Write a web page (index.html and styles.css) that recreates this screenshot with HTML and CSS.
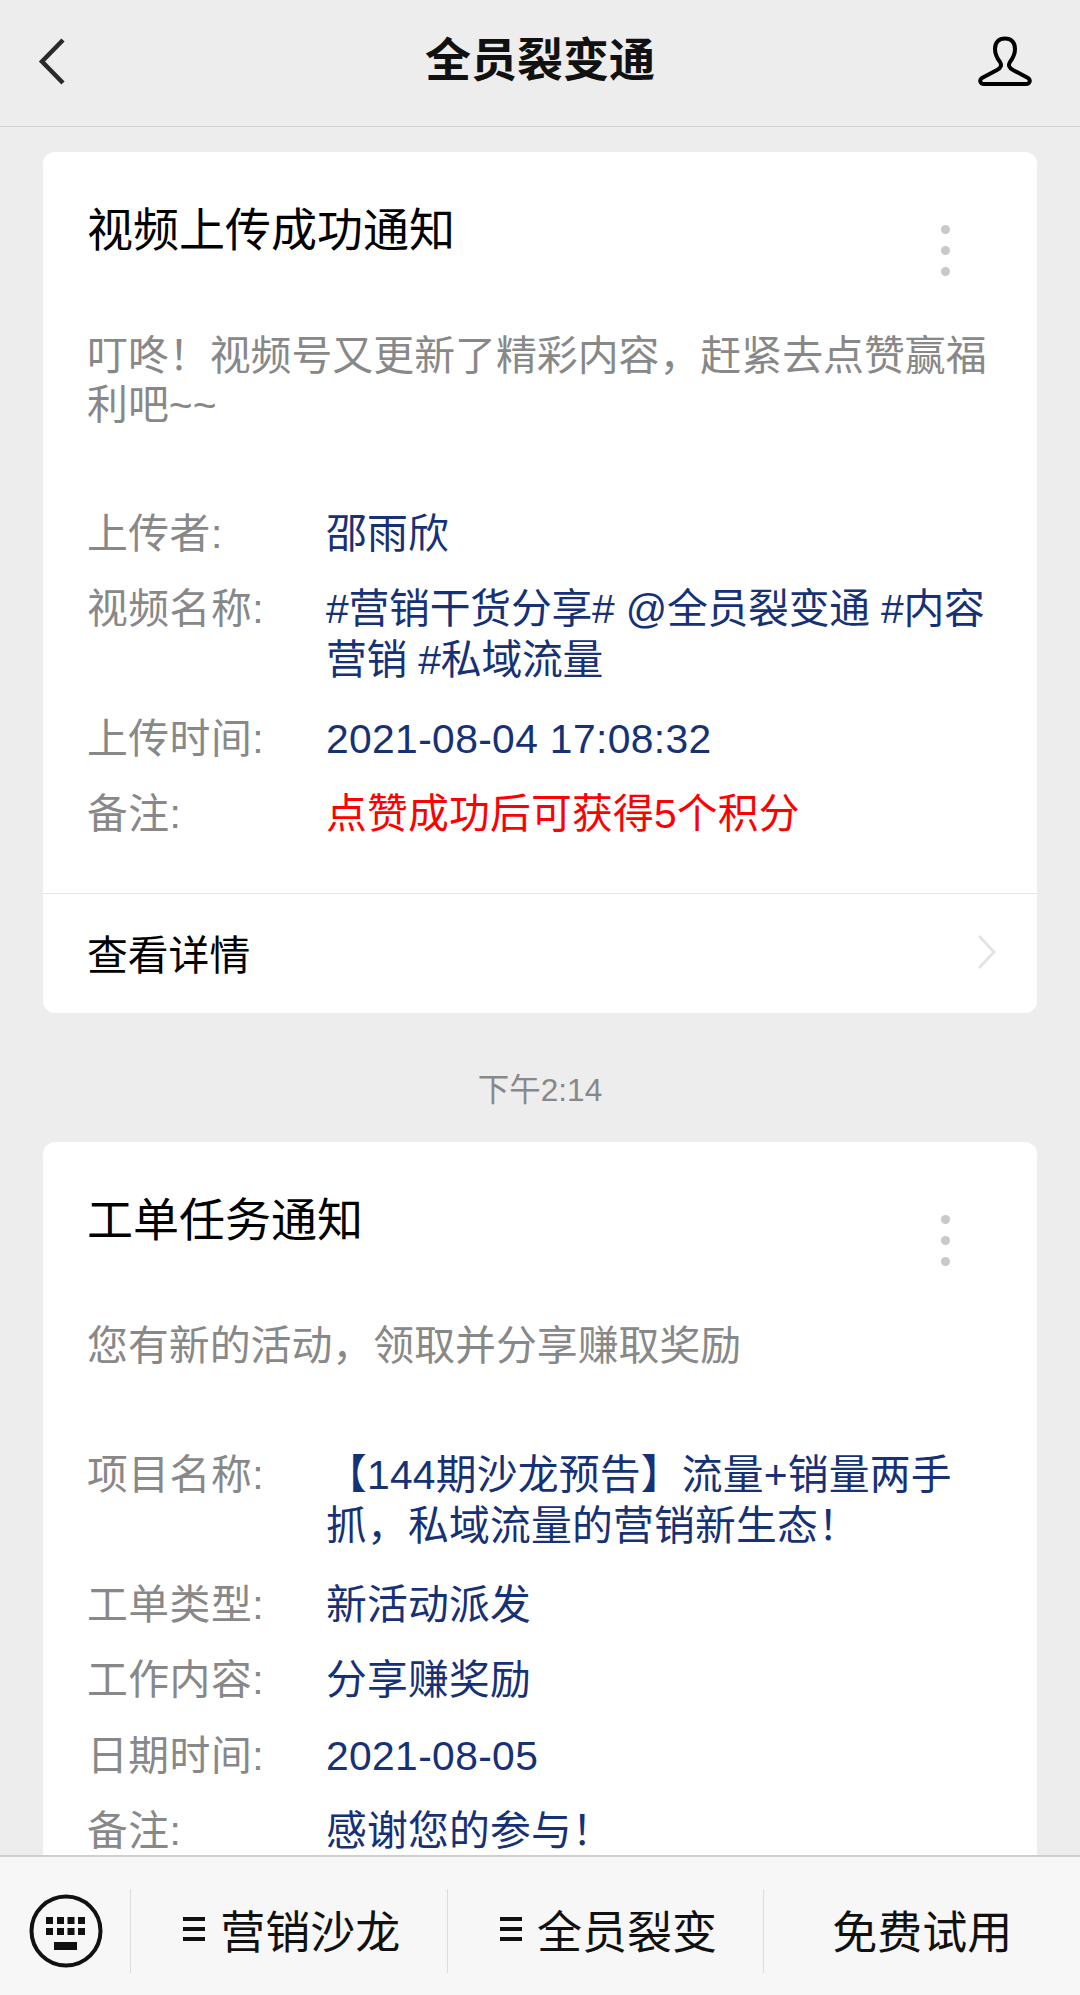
FILE: index.html
```html
<!DOCTYPE html>
<html lang="zh-CN">
<head>
  <meta charset="UTF-8">
  <title>全员裂变通</title>
  <link rel="stylesheet" href="styles.css">
</head>
<body>
<div class="app">

  <header class="nav">
    <svg width="110" height="126" viewBox="0 0 110 126">
      <path d="M63 40 L42 61.500 L63 83" fill="none" stroke="#2a2a2a" stroke-width="4.500"/>
    </svg>
    <h1 class="nav-title">全员裂变通</h1>
    <svg width="110" height="126" viewBox="0 0 110 126">
      <path d="M14 84 H56 C60 84 61 80 58 78 L43 70 C39 68 38 65 40 62 C43 58 45 54 45 49 C45 42 41 38.500 35 38.500 C29 38.500 25 42 25 49 C25 54 27 58 30 62 C32 65 31 68 27 70 L12 78 C9 80 10 84 14 84 Z" fill="none" stroke="#000" stroke-width="4"/>
    </svg>
  </header>

  <main class="feed">

    <!-- 第一条消息 -->
    <section class="card">
      <div class="card-body">
        <div class="title-row">
          <h2 class="card-title">视频上传成功通知</h2>
          <span class="dots"><i></i><i></i><i></i></span>
        </div>
        <p class="desc">叮咚！视频号又更新了精彩内容，赶紧去点赞赢福利吧~~</p>
        <div class="row">
          <span class="label">上传者:</span>
          <span class="value">邵雨欣</span>
        </div>
        <div class="row row-multi">
          <span class="label">视频名称:</span>
          <span class="value tight">#营销干货分享# @全员裂变通 #内容营销 #私域流量</span>
        </div>
        <div class="row">
          <span class="label">上传时间:</span>
          <span class="value num">2021-08-04 17:08:32</span>
        </div>
        <div class="row">
          <span class="label">备注:</span>
          <span class="value red">点赞成功后可获得5个积分</span>
        </div>
      </div>
      <div class="card-foot">
        <span>查看详情</span>
        <svg width="20" height="36" viewBox="0 0 20 36">
          <path d="M2 2 L17 18 L2 34" fill="none" stroke="#e4e4e4" stroke-width="3"/>
        </svg>
      </div>
    </section>

    <p class="time">下午2:14</p>

    <!-- 第二条消息 -->
    <section class="card">
      <div class="card-body">
        <div class="title-row">
          <h2 class="card-title">工单任务通知</h2>
          <span class="dots"><i></i><i></i><i></i></span>
        </div>
        <p class="desc">您有新的活动，领取并分享赚取奖励</p>
        <div class="row row-multi">
          <span class="label">项目名称:</span>
          <span class="value">【144期沙龙预告】流量+销量两手抓，私域流量的营销新生态！</span>
        </div>
        <div class="row">
          <span class="label">工单类型:</span>
          <span class="value">新活动派发</span>
        </div>
        <div class="row">
          <span class="label">工作内容:</span>
          <span class="value">分享赚奖励</span>
        </div>
        <div class="row">
          <span class="label">日期时间:</span>
          <span class="value num">2021-08-05</span>
        </div>
        <div class="row">
          <span class="label">备注:</span>
          <span class="value">感谢您的参与！</span>
        </div>
      </div>
    </section>

  </main>

  <footer class="bar">
    <div class="bar-key">
      <svg width="74" height="74" viewBox="0 0 74 74">
        <circle cx="37" cy="37" r="34.500" fill="none" stroke="#111" stroke-width="4"/>
        <g fill="#111">
          <rect x="17" y="23" width="7" height="7"/>
          <rect x="28" y="23" width="7" height="7"/>
          <rect x="38.500" y="23" width="7" height="7"/>
          <rect x="49" y="23" width="7" height="7"/>
          <rect x="17" y="34" width="7" height="7"/>
          <rect x="28" y="34" width="7" height="7"/>
          <rect x="38.500" y="34" width="7" height="7"/>
          <rect x="49" y="34" width="7" height="7"/>
          <rect x="25" y="48" width="23" height="8"/>
        </g>
      </svg>
    </div>
    <div class="bar-item"><span class="menu-mark"><i></i><i></i><i></i></span>营销沙龙</div>
    <div class="bar-item"><span class="menu-mark"><i></i><i></i><i></i></span>全员裂变</div>
    <div class="bar-item">免费试用</div>
  </footer>

</div>
</body>
</html>
```

FILE: styles.css
```css
* { box-sizing: border-box; }
body {
  margin: 0;
  background-color: #ededed;
  font-family: "Liberation Sans", "Noto Sans CJK SC", sans-serif;
}
h1, h2, p { margin: 0; font-weight: normal; }

.app {
  display: flex;
  flex-direction: column;
  height: 1995px;
  overflow: hidden;
}

/* barra superior */
.nav {
  flex: none;
  display: flex;
  justify-content: space-between;
  align-items: center;
  height: 127px;
  border-bottom: 1px solid #d6d6d6;
}
.nav-title {
  font-size: 46px;
  font-weight: bold;
  color: #111;
  margin-bottom: 14px;
}

/* mensajes */
.feed {
  flex: 1;
  min-height: 0;
  overflow: hidden;
  padding: 25px 43px 0;
}
.card {
  background-color: #fff;
  border-radius: 12px;
}
.card-body { padding: 48px 45px 52.500px 44px; }
.title-row {
  display: flex;
  justify-content: space-between;
  align-items: flex-start;
  height: 77px;
  margin-bottom: 55px;
}
.card-title {
  font-size: 46px;
  line-height: 60px;
  color: #000;
}
.dots {
  display: flex;
  flex-direction: column;
  gap: 12px;
  margin: 25px 42px 0 0;
}
.dots i {
  width: 9px;
  height: 9px;
  border-radius: 50%;
  background-color: #c8c8cd;
}
.desc {
  font-size: 40.900px;
  line-height: 48.500px;
  color: #888;
  margin-bottom: 79.500px;
}
.row {
  display: flex;
  font-size: 40.800px;
  line-height: 51px;
  margin-bottom: 24.400px;
}
.row:last-child { margin-bottom: 0; }
.row-multi { margin-bottom: 28px; }
.label {
  flex: none;
  width: 239px;
  color: #888;
  letter-spacing: 0.500px;
}
.value {
  flex: 1;
  color: #173177;
  letter-spacing: 0.200px;
}
.num { letter-spacing: 0.350px; }
.tight { letter-spacing: -0.200px; }
.red { color: #f00; }

.card-foot {
  display: flex;
  justify-content: space-between;
  align-items: center;
  height: 120px;
  padding: 0 40px 2px 44px;
  border-top: 1px solid #e5e5e5;
  font-size: 40.800px;
  color: #000;
}

.time {
  height: 129px;
  padding-top: 54px;
  font-size: 31.500px;
  line-height: 46px;
  text-align: center;
  color: #888;
}

/* menu inferior */
.bar {
  flex: none;
  display: flex;
  height: 140px;
  border-top: 2px solid #cfcfcf;
  background-color: #f7f7f7;
  padding: 32px 0 22px;
}
.bar-key {
  flex: none;
  display: flex;
  justify-content: center;
  align-items: center;
  width: 131px;
  padding-left: 2px;
  border-right: 1px solid #dcdcdc;
}
.bar-item {
  flex: 1;
  display: flex;
  justify-content: center;
  align-items: center;
  gap: 15px;
  padding-bottom: 4px;
  font-size: 45px;
  color: #111;
  border-right: 1px solid #dcdcdc;
}
.bar-item:last-child { border-right: 0; }
.menu-mark {
  display: flex;
  flex-direction: column;
  gap: 6.500px;
  width: 22px;
  margin-left: 6px;
}
.menu-mark i {
  height: 3.500px;
  background-color: #111;
}
```
